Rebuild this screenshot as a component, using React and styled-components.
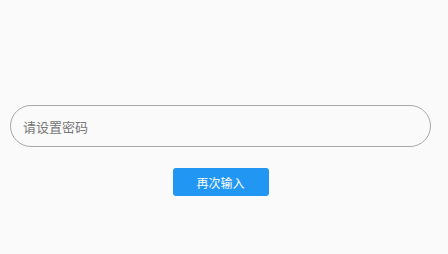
import styled, { createGlobalStyle } from "styled-components";

const GlobalStyle = createGlobalStyle`
  html, body {
    margin: 0;
    padding: 0;
    background: #fafafa;
  }
  body {
    font-family: "Noto Sans CJK SC", "Noto Sans", sans-serif;
  }
`;

const Page = styled.div`
  height: 254px;
  box-sizing: border-box;
  padding: 105px 17px 0 10px;
`;

const Form = styled.div`
  display: flex;
  flex-direction: column;
  align-items: center;
  gap: 21px;
`;

const PasswordInput = styled.input`
  width: 100%;
  height: 42px;
  box-sizing: border-box;
  border: 1px solid #a8a8a8;
  border-radius: 21px;
  background: #fafafa;
  padding: 0 12px;
  font-family: inherit;
  font-size: 13px;
  color: #333;
  outline: none;

  &::placeholder {
    color: #777;
  }
`;

const SubmitButton = styled.button`
  width: 96px;
  height: 28px;
  border: none;
  border-radius: 3px;
  background: #2196f3;
  color: #fff;
  font-family: inherit;
  font-size: 12px;
  cursor: pointer;
  padding: 0;
`;

const App = () => {
  return (
    <>
      <GlobalStyle />
      <Page>
        <Form>
          <PasswordInput type="password" placeholder="请设置密码" />
          <SubmitButton>再次输入</SubmitButton>
        </Form>
      </Page>
    </>
  );
};

export default App;
